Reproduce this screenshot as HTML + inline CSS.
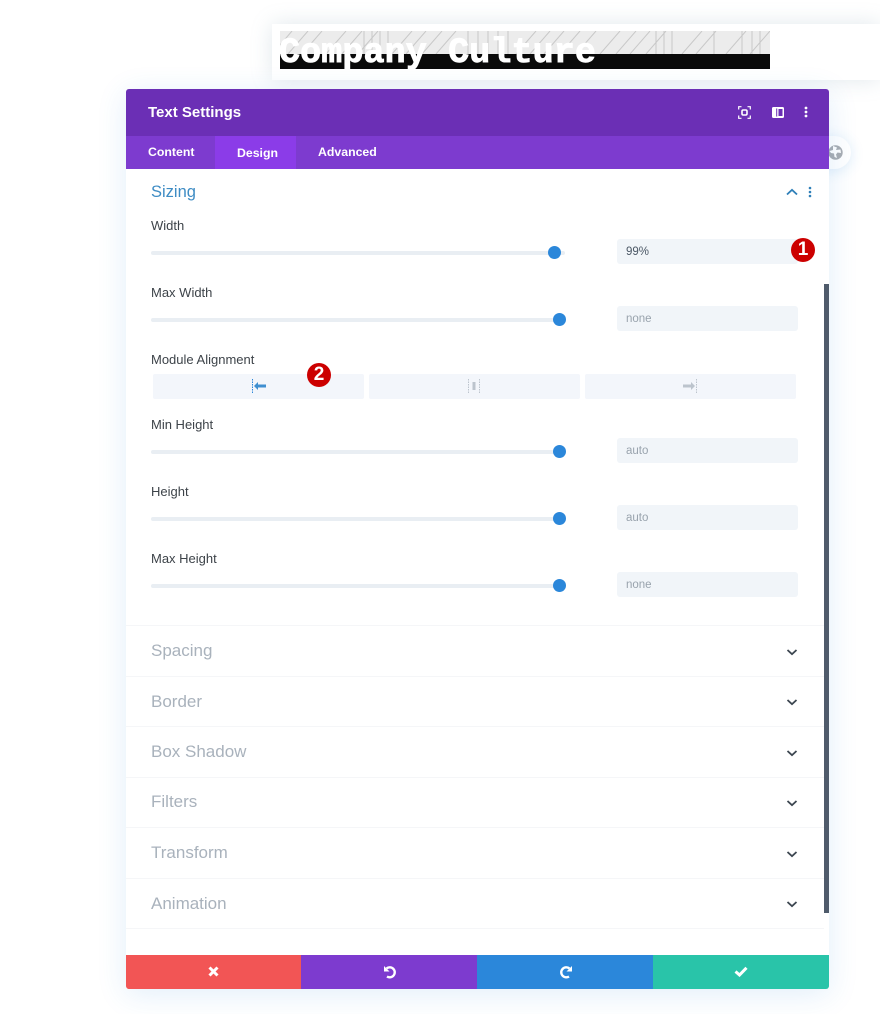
<!DOCTYPE html>
<html>
<head>
<meta charset="utf-8">
<style>
html,body{margin:0;padding:0;background:#fff}
body{width:880px;height:1014px;position:relative;overflow:hidden;font-family:"Liberation Sans",sans-serif}
.a{position:absolute}
.t{position:absolute;white-space:nowrap}
.label{font-size:13px;color:#3d4349;left:151px;line-height:16px}
.track{position:absolute;left:151px;width:414px;height:4px;background:#e9eef3;border-radius:2px}
.knob{position:absolute;width:13px;height:13px;border-radius:50%;background:#2b87da}
.inp{position:absolute;left:617px;width:181px;height:25px;background:#f1f5f9;border-radius:3px;font-size:11.5px;line-height:27px;color:#99a3ad;text-indent:9px}
.sec{position:absolute;left:151px;font-size:17px;color:#a9b2bc;line-height:22px;white-space:nowrap}
.sep{position:absolute;left:126px;width:698px;height:1px;background:#f5f6f8}
.seg{position:absolute;top:374px;height:25px;background:#f3f6fb;border-radius:2px}
.badge{position:absolute;width:24px;height:24px;border-radius:50%;background:#cc0000;color:#fff;font-size:19px;font-weight:700;line-height:24px;text-align:center}
.tab{position:absolute;white-space:nowrap;font-size:12.3px;font-weight:700;line-height:16px;color:#fff}
svg{position:absolute;display:block}
</style>
</head>
<body>
<!-- top module card -->
<div class="a" style="left:272px;top:24px;width:608px;height:56px;background:#fff;box-shadow:0 0 22px rgba(120,150,170,.22)"></div>
<svg style="left:280px;top:31px" width="490" height="23" viewBox="0 0 490 23">
<rect width="490" height="23" fill="#ececec"/>
<g stroke="#c8c8c8" stroke-width="1" fill="none">
<path d="M0 14L12 0M8 23L28 0M22 23L42 0M46 23L66 0M62 23L82 0M78 23L98 0M112 23L132 0M126 23L146 0M142 23L162 0M156 23L176 0M236 23L256 0M250 23L270 0M264 23L284 0M280 23L300 0M296 23L316 0M320 23L340 0M336 23L356 0M350 23L370 0M366 23L386 0M402 23L422 0M416 23L436 0M446 23L466 0M470 23L490 0"/>
<path d="M84 0V23M92 0V23M100 0V23M108 0V23M188 0V23M198 0V23M208 0V23M218 0V23M228 0V23M376 0V23M384 0V23M392 0V23M434 0V23M462 0V23M472 0V23M480 0V23"/>
</g>
</svg>
<div class="a" style="left:280px;top:54px;width:490px;height:15px;background:#0a0a0a"></div>
<div class="t" style="left:279px;top:32px;font-family:'Liberation Mono',monospace;font-weight:700;font-size:35px;letter-spacing:.13px;line-height:42px;color:#fff;-webkit-text-stroke:.9px #fff">Company Culture</div>

<!-- globe button -->
<div class="a" style="left:810px;top:136px;width:41px;height:33px;border-radius:17px;background:#fff;box-shadow:0 2px 14px rgba(43,135,218,.16)"></div>
<svg style="left:828px;top:145px" width="15" height="15" viewBox="0 0 15 15"><circle cx="7.5" cy="7.5" r="7.2" fill="#a9adb2"/><path d="M5 1L9 2.5L8 5L12.5 4.5L13 8L9.5 7.5L8 9.5L9 13L6.5 12L6 8.5L3 8L1.5 6L5 5Z" fill="#fff"/></svg>

<!-- panel -->
<div class="a" style="left:126px;top:89px;width:703px;height:900px;background:#fff;border-radius:3px;box-shadow:0 5px 30px rgba(43,135,218,.14)"></div>
<div class="a" style="left:126px;top:89px;width:703px;height:47px;background:#6b2fb5;border-radius:3px 3px 0 0"></div>
<div class="a" style="left:126px;top:136px;width:703px;height:33px;background:#7d3bcf"></div>
<div class="a" style="left:215px;top:136px;width:81px;height:33px;background:#8b3ce8"></div>
<div class="t" style="left:148px;top:104px;font-size:15px;font-weight:700;line-height:18px;color:#fff">Text Settings</div>
<div class="tab" style="left:148px;top:144px">Content</div>
<div class="tab" style="left:237px;top:145px">Design</div>
<div class="tab" style="left:318px;top:144px">Advanced</div>

<!-- header icons -->
<svg style="left:738px;top:106px" width="13" height="13" viewBox="0 0 13 13" fill="none" stroke="#fff" stroke-width="1.2"><path d="M.7 3.5V.7H3.5M9.5.7H12.3V3.5M12.3 9.5V12.3H9.5M3.5 12.3H.7V9.5"/><rect x="4" y="4" width="5" height="5" rx="1.2" stroke-width="1.6"/></svg>
<svg style="left:772px;top:107px" width="12" height="11" viewBox="0 0 12 11"><rect width="12" height="11" rx="1.5" fill="#fff"/><rect x="4.2" y="1.5" width="1" height="8" fill="#6b2fb5"/><rect x="6.5" y="2" width="4" height="7" fill="#6b2fb5"/></svg>
<svg style="left:804px;top:106px" width="4" height="12" viewBox="0 0 4 12" fill="#fff"><circle cx="2" cy="2" r="1.4"/><circle cx="2" cy="6" r="1.4"/><circle cx="2" cy="10" r="1.4"/></svg>

<!-- sizing header -->
<div class="t" style="left:151px;top:181px;font-size:16.5px;line-height:22px;color:#3e8cc4">Sizing</div>
<svg style="left:786px;top:188px" width="12" height="8" viewBox="0 0 12 8" fill="none" stroke="#2e7fb8" stroke-width="1.8"><path d="M1 6.5L6 1.8L11 6.5"/></svg>
<svg style="left:808px;top:186px" width="4" height="12" viewBox="0 0 4 12" fill="#2e7fb8"><circle cx="2" cy="2" r="1.3"/><circle cx="2" cy="6" r="1.3"/><circle cx="2" cy="10" r="1.3"/></svg>

<!-- fields -->
<div class="t label" style="top:218px">Width</div>
<div class="track" style="top:251px"></div>
<div class="knob" style="left:548px;top:246px"></div>
<div class="inp" style="top:239px;color:#4c5866">99%</div>

<div class="t label" style="top:285px">Max Width</div>
<div class="track" style="top:318px"></div>
<div class="knob" style="left:553px;top:313px"></div>
<div class="inp" style="top:306px">none</div>

<div class="t label" style="top:352px">Module Alignment</div>
<div class="seg" style="left:153px;width:211px"></div>
<div class="seg" style="left:369px;width:211px"></div>
<div class="seg" style="left:585px;width:211px"></div>
<svg style="left:251px;top:379px" width="16" height="14" viewBox="0 0 16 14"><path d="M1.5 0V14" stroke="#2b87da" stroke-width="1" stroke-dasharray="1.5 1"/><path d="M15 5.5H7V3L3 7L7 11V8.5H15Z" fill="#3f8fd0"/></svg>
<svg style="left:467px;top:379px" width="16" height="14" viewBox="0 0 16 14"><path d="M1.5 0V14M12.5 0V14" stroke="#bcc4cd" stroke-width="1" stroke-dasharray="1.5 1"/><rect x="5.5" y="3" width="3" height="8" fill="#bcc4cd"/></svg>
<svg style="left:682px;top:379px" width="16" height="14" viewBox="0 0 16 14"><path d="M14.5 0V14" stroke="#bcc4cd" stroke-width="1" stroke-dasharray="1.5 1"/><path d="M1 5.5H9V3L13 7L9 11V8.5H1Z" fill="#bcc4cd"/></svg>

<div class="t label" style="top:417px">Min Height</div>
<div class="track" style="top:450px"></div>
<div class="knob" style="left:553px;top:445px"></div>
<div class="inp" style="top:438px">auto</div>

<div class="t label" style="top:484px">Height</div>
<div class="track" style="top:517px"></div>
<div class="knob" style="left:553px;top:512px"></div>
<div class="inp" style="top:505px">auto</div>

<div class="t label" style="top:551px">Max Height</div>
<div class="track" style="top:584px"></div>
<div class="knob" style="left:553px;top:579px"></div>
<div class="inp" style="top:572px">none</div>

<!-- badges -->
<div class="badge" style="left:791px;top:238px">1</div>
<div class="badge" style="left:307px;top:363px">2</div>

<!-- sections -->
<div class="sep" style="top:625px"></div>
<div class="sec" style="top:640px">Spacing</div>
<div class="sep" style="top:676px"></div>
<div class="sec" style="top:691px">Border</div>
<div class="sep" style="top:726px"></div>
<div class="sec" style="top:741px">Box Shadow</div>
<div class="sep" style="top:777px"></div>
<div class="sec" style="top:791px">Filters</div>
<div class="sep" style="top:827px"></div>
<div class="sec" style="top:842px">Transform</div>
<div class="sep" style="top:878px"></div>
<div class="sec" style="top:893px">Animation</div>
<div class="sep" style="top:928px"></div>

<svg style="left:786px;top:649px" width="12" height="7" viewBox="0 0 12 7" fill="none" stroke="#3c4650" stroke-width="1.8"><path d="M1.5 1L6 5.2L10.5 1"/></svg>
<svg style="left:786px;top:699px" width="12" height="7" viewBox="0 0 12 7" fill="none" stroke="#3c4650" stroke-width="1.8"><path d="M1.5 1L6 5.2L10.5 1"/></svg>
<svg style="left:786px;top:750px" width="12" height="7" viewBox="0 0 12 7" fill="none" stroke="#3c4650" stroke-width="1.8"><path d="M1.5 1L6 5.2L10.5 1"/></svg>
<svg style="left:786px;top:800px" width="12" height="7" viewBox="0 0 12 7" fill="none" stroke="#3c4650" stroke-width="1.8"><path d="M1.5 1L6 5.2L10.5 1"/></svg>
<svg style="left:786px;top:851px" width="12" height="7" viewBox="0 0 12 7" fill="none" stroke="#3c4650" stroke-width="1.8"><path d="M1.5 1L6 5.2L10.5 1"/></svg>
<svg style="left:786px;top:901px" width="12" height="7" viewBox="0 0 12 7" fill="none" stroke="#3c4650" stroke-width="1.8"><path d="M1.5 1L6 5.2L10.5 1"/></svg>

<!-- scrollbar -->
<div class="a" style="left:824px;top:284px;width:5px;height:629px;background:#4f5b6b"></div>

<!-- footer -->
<div class="a" style="left:126px;top:955px;width:175px;height:34px;background:#f25555;border-radius:0 0 0 3px"></div>
<div class="a" style="left:301px;top:955px;width:176px;height:34px;background:#7d3bcf"></div>
<div class="a" style="left:477px;top:955px;width:176px;height:34px;background:#2b87da"></div>
<div class="a" style="left:653px;top:955px;width:176px;height:34px;background:#29c4a9;border-radius:0 0 3px 0"></div>
<svg style="left:208px;top:966px" width="11" height="11" viewBox="0 0 11 11" fill="none" stroke="#fff" stroke-width="3"><path d="M1.5 1.5L9.5 9.5M9.5 1.5L1.5 9.5"/></svg>
<svg style="left:383px;top:965px" width="14" height="14" viewBox="0 0 14 14" fill="none"><path d="M3.5 3.5A5 5 0 1 1 4 11.5" stroke="#fff" stroke-width="2.4"/><path d="M1 1V6.5H6.5Z" fill="#fff"/></svg>
<svg style="left:559px;top:965px" width="14" height="14" viewBox="0 0 14 14" fill="none"><path d="M10.5 3.5A5 5 0 1 0 10 11.5" stroke="#fff" stroke-width="2.4"/><path d="M13 1V6.5H7.5Z" fill="#fff"/></svg>
<svg style="left:734px;top:966px" width="14" height="11" viewBox="0 0 14 11" fill="none" stroke="#fff" stroke-width="3"><path d="M1.5 5.5L5.5 9L12.5 1.8"/></svg>
</body>
</html>
